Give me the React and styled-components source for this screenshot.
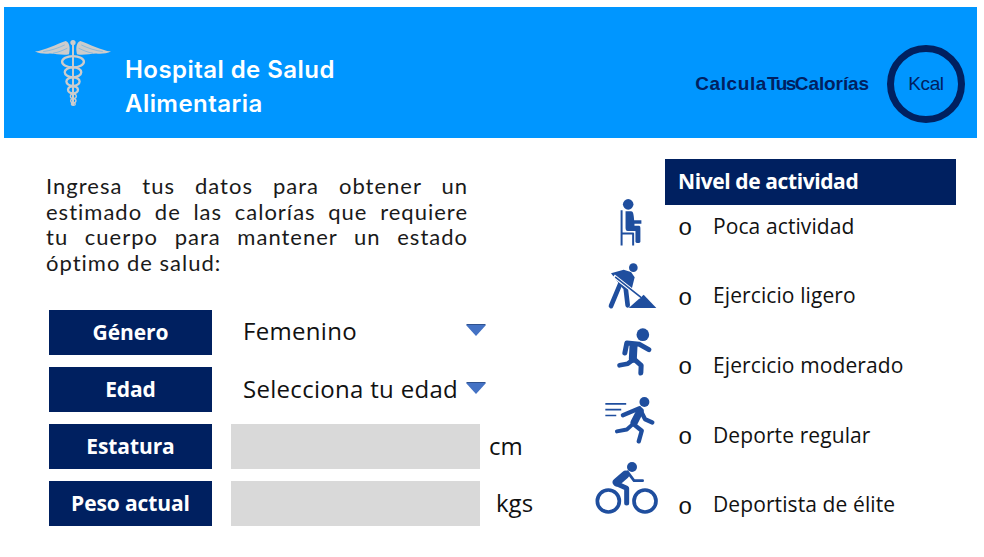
import React from "react";
import styled, { createGlobalStyle } from "styled-components";

const GlobalStyle = createGlobalStyle`
  body {
    margin: 0;
    background: #ffffff;
    font-family: "Open Sans", "Noto Sans", sans-serif;
  }
`;

const Page = styled.div`
  width: 984px;
  height: 557px;
  overflow: hidden;
`;

const Header = styled.header`
  margin: 7px 7px 0 4px;
  height: 131px;
  background: #0096ff;
  display: flex;
  align-items: center;
  padding: 0 12px 0 30px;
  box-sizing: border-box;
`;

const Brand = styled.div`
  display: flex;
  align-items: center;
  flex: 1;
`;

const BrandName = styled.h1`
  margin: 28px 0 0 13px;
  color: #ffffff;
  font-family: "Inter", "Liberation Sans", sans-serif;
  font-size: 24px;
  line-height: 34px;
  font-weight: 600;
  letter-spacing: 0.45px;
`;

const Tagline = styled.div`
  display: flex;
  margin-top: 22px;
  color: #002060;
  font-family: "Liberation Sans", Arial, sans-serif;
  font-size: 19px;
  font-weight: 700;
`;

const TagWord = styled.span`
  letter-spacing: ${(p) => p.$spacing}px;
`;

const KcalRing = styled.div`
  margin: 22px 0 0 18px;
  width: 78px;
  height: 78px;
  box-sizing: border-box;
  border: 7px solid #002060;
  border-radius: 50%;
  display: flex;
  align-items: center;
  justify-content: center;
  color: #002060;
  font-family: "Liberation Sans", Arial, sans-serif;
  font-size: 19px;
  letter-spacing: -0.4px;
`;

const Main = styled.main`
  display: flex;
  padding-top: 21px;
`;

const FormColumn = styled.section`
  width: 591px;
  padding-left: 46px;
  box-sizing: border-box;
`;

const Intro = styled.p`
  margin: 14px 0 0;
  width: 422px;
  color: #1a1a1a;
  font-family: "Lato", sans-serif;
  font-size: 22px;
  line-height: 25.6px;
  letter-spacing: 1px;
`;

const IntroLine = styled.span`
  display: block;
  text-align: justify;
  text-align-last: ${(p) => (p.$last ? "left" : "justify")};
`;

const Form = styled.div`
  margin: 35px 0 0 3px;
  display: flex;
  flex-direction: column;
  gap: 12px;
`;

const Row = styled.div`
  display: flex;
  align-items: center;
  height: 45px;
`;

const Label = styled.div`
  width: 163px;
  height: 45px;
  background: #002060;
  color: #ffffff;
  font-size: 21px;
  font-weight: 700;
  letter-spacing: -0.1px;
  display: flex;
  align-items: center;
  justify-content: center;
  padding-bottom: 1px;
  box-sizing: border-box;
`;

const Select = styled.div`
  margin-left: 31px;
  width: 243px;
  display: flex;
  align-items: center;
  justify-content: space-between;
  color: #111111;
  font-size: 24px;
  letter-spacing: 0.3px;
  padding-bottom: ${(p) => p.$lift}px;
`;

const Caret = styled.span`
  width: 0;
  height: 0;
  border-left: 10px solid transparent;
  border-right: 10px solid transparent;
  border-top: 11px solid #4472c4;
  filter: drop-shadow(0 -1px 0 #2f528f);
`;

const Input = styled.div`
  margin-left: 19px;
  width: 249px;
  height: 45px;
  background: #d9d9d9;
`;

const Unit = styled.span`
  margin-left: ${(p) => p.$gap}px;
  padding-bottom: 2px;
  color: #111111;
  font-size: 24px;
`;

const ActivityColumn = styled.section`
  flex: 1;
  display: flex;
  flex-direction: column;
  align-items: flex-start;
`;

const ActivityTitle = styled.div`
  margin-left: 74px;
  width: 291px;
  height: 46px;
  padding: 0 0 3px 13px;
  box-sizing: border-box;
  background: #002060;
  color: #ffffff;
  font-size: 21px;
  font-weight: 700;
  letter-spacing: -0.4px;
  display: flex;
  align-items: center;
`;

const ActivityList = styled.div`
  margin-top: -14px;
`;

const ActivityRow = styled.div`
  height: 69.6px;
  display: flex;
  align-items: center;
  color: #111111;
  font-size: 21px;
  letter-spacing: 0.1px;
`;

const IconSlot = styled.div`
  width: 87px;
  display: flex;
  justify-content: center;
  svg {
    margin: 0 ${(p) => p.$left * 2}px ${(p) => p.$up * 2}px 0;
    fill: #1f4e9e;
    stroke: #1f4e9e;
    stroke-linecap: round;
    stroke-linejoin: round;
    flex: none;
  }
`;

const Bullet = styled.span`
  width: 35px;
  padding-top: 6px;
  font-family: "Liberation Mono", monospace;
  font-size: 24px;
  font-weight: 400;
`;

const Caduceus = () => (
  <svg width="78" height="68" viewBox="102 115 236 204">
    <g fill="#cccccc" stroke="none">
      <path d="M105 152 C135 148 170 130 198 120 C210 125 212 140 208 160 C190 165 170 158 150 158 C135 160 118 158 105 152Z" />
      <path d="M335 152 C305 148 270 130 242 120 C230 125 228 140 232 160 C250 165 270 158 290 158 C305 160 322 158 335 152Z" />
      <circle cx="220" cy="125" r="8" />
      <rect x="217" y="130" width="6" height="185" />
    </g>
    <g fill="none" stroke="#0096ff" strokeWidth="1">
      <path d="M130 152 C150 150 175 142 195 132" />
      <path d="M160 157 C175 155 190 148 203 142" />
      <path d="M310 152 C290 150 265 142 245 132" />
      <path d="M280 157 C265 155 250 148 237 142" />
    </g>
    <g fill="none" stroke="#cccccc" strokeWidth="7">
      <ellipse cx="220" cy="183" rx="33" ry="17" />
      <ellipse cx="220" cy="215" rx="25" ry="15" />
      <ellipse cx="220" cy="243" rx="20" ry="13" />
      <ellipse cx="220" cy="268" rx="15" ry="11" />
    </g>
    <g fill="none" stroke="#cccccc" strokeWidth="4">
      <ellipse cx="221" cy="287" rx="9" ry="7" />
      <ellipse cx="221" cy="301" rx="8" ry="6" />
      <ellipse cx="221" cy="311" rx="6" ry="4" />
    </g>
  </svg>
);

const Seated = () => (
  <svg width="33" height="53" viewBox="70 25 100 160">
    <circle cx="113" cy="47" r="16" stroke="none" />
    <path
      stroke="none"
      d="M105 68 H122 C128 68 130 78 131 95 H153 V106 H132 V112 H146 C149 112 150 115 150 120 V160 C150 165 135 165 135 160 V128 H112 C106 128 105 122 105 118Z"
    />
    <path
      fill="none"
      strokeWidth="6"
      strokeLinecap="butt"
      d="M93 65 V172 M93 135 H128 V172"
    />
  </svg>
);

const Digger = () => (
  <svg width="50" height="50" viewBox="50 220 150 150">
    <circle cx="129" cy="237" r="13" stroke="none" />
    <path stroke="none" d="M115 358 L160 318 L198 358Z" />
    <path stroke="none" d="M62 254 L100 243 L122 250 L133 266 L124 302 L98 300 L84 282Z" />
    <path fill="none" strokeWidth="14" d="M90 285 L62 352" />
    <path fill="none" strokeWidth="14" d="M106 298 L112 350" />
    <path fill="none" stroke="#ffffff" strokeWidth="11" strokeLinecap="butt" d="M70 262 L152 326" />
    <path fill="none" strokeWidth="5" d="M76 266 L152 326" />
  </svg>
);

const Runner = () => (
  <svg width="37" height="50" viewBox="80 410 110 150">
    <circle cx="160" cy="433" r="19" stroke="none" />
    <path fill="none" strokeWidth="15" d="M178 478 L150 462 L112 458 L106 488" />
    <path fill="none" strokeWidth="24" d="M132 468 L130 505" />
    <path fill="none" strokeWidth="14" d="M128 510 L115 520 L90 525" />
    <path fill="none" strokeWidth="15" d="M132 505 L155 525 L154 548" />
  </svg>
);

const Sprinter = () => (
  <svg width="53" height="48" viewBox="42 45 158 145">
    <circle cx="163" cy="63" r="15" stroke="none" />
    <path fill="none" strokeWidth="5" strokeLinecap="butt" d="M45 69 H108 M45 86 H93 M45 104 H78" />
    <path fill="none" strokeWidth="13" d="M98 103 L148 82 L165 115 L187 125" />
    <path fill="none" strokeWidth="22" d="M150 90 L132 125" />
    <path fill="none" strokeWidth="12" d="M128 130 L110 146 L80 152" />
    <path fill="none" strokeWidth="13" d="M130 130 L155 150 L146 182" />
  </svg>
);

const Cyclist = () => (
  <svg width="65" height="54" viewBox="12 245 195 160">
    <circle cx="126" cy="262" r="15" stroke="none" />
    <circle cx="55" cy="364" r="33" fill="none" strokeWidth="11" />
    <circle cx="165" cy="364" r="33" fill="none" strokeWidth="11" />
    <path fill="none" strokeWidth="24" d="M80 308 L106 285" />
    <path fill="none" strokeWidth="8" d="M112 276 L132 303 H158" />
    <path fill="none" strokeWidth="15" d="M80 312 L110 326 V370" />
  </svg>
);

const activities = [
  { name: "Poca actividad", Icon: Seated, left: 4.5, up: 2 },
  { name: "Ejercicio ligero", Icon: Digger, left: 2.5, up: 8 },
  { name: "Ejercicio moderado", Icon: Runner, left: 0.5, up: 13 },
  { name: "Deporte regular", Icon: Sprinter, left: 4.5, up: 15 },
  { name: "Deportista de élite", Icon: Cyclist, left: 8.5, up: 16 },
];

const introLines = [
  "Ingresa tus datos para obtener un",
  "estimado de las calorías que requiere",
  "tu cuerpo para mantener un estado",
  "óptimo de salud:",
];

export default function App() {
  return (
    <Page>
      <GlobalStyle />
      <Header>
        <Brand>
          <Caduceus />
          <BrandName>
            Hospital de Salud
            <br />
            Alimentaria
          </BrandName>
        </Brand>
        <Tagline>
          <TagWord $spacing={0.6}>Calcula</TagWord>
          <TagWord $spacing={-1.5}>Tus</TagWord>
          <TagWord $spacing={-0.1}>Calorías</TagWord>
        </Tagline>
        <KcalRing>Kcal</KcalRing>
      </Header>
      <Main>
        <FormColumn>
          <Intro>
            {introLines.map((line, i) => (
              <IntroLine key={line} $last={i === introLines.length - 1}>
                {line}
              </IntroLine>
            ))}
          </Intro>
          <Form>
            <Row>
              <Label>Género</Label>
              <Select $lift={4}>
                Femenino
                <Caret />
              </Select>
            </Row>
            <Row>
              <Label>Edad</Label>
              <Select $lift={2}>
                Selecciona tu edad
                <Caret />
              </Select>
            </Row>
            <Row>
              <Label>Estatura</Label>
              <Input />
              <Unit $gap={9}>cm</Unit>
            </Row>
            <Row>
              <Label>Peso actual</Label>
              <Input />
              <Unit $gap={16}>kgs</Unit>
            </Row>
          </Form>
        </FormColumn>
        <ActivityColumn>
          <ActivityTitle>Nivel de actividad</ActivityTitle>
          <ActivityList>
            {activities.map(({ name, Icon, left, up }) => (
              <ActivityRow key={name}>
                <IconSlot $left={left} $up={up}>
                  <Icon />
                </IconSlot>
                <Bullet>o</Bullet>
                {name}
              </ActivityRow>
            ))}
          </ActivityList>
        </ActivityColumn>
      </Main>
    </Page>
  );
}
